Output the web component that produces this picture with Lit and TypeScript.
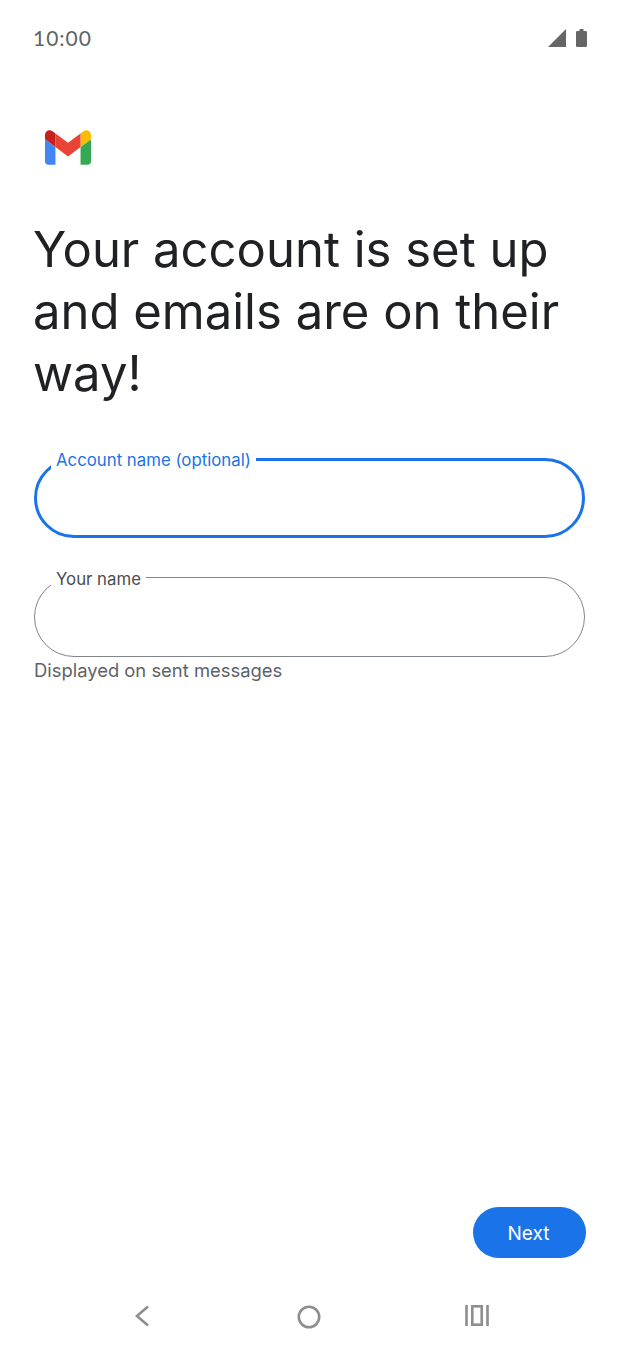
import { LitElement, html, css } from "lit";
import { customElement } from "lit/decorators.js";

@customElement("app-root")
export class AppRoot extends LitElement {
  static styles = css`
    :host { display: block; }
    .page { width: 619px; height: 1350px; box-sizing: border-box; background: #fff; display: flex; flex-direction: column; font-family: Inter, sans-serif; overflow: hidden; }
    .status { display: flex; justify-content: space-between; align-items: center; height: 18px; margin-top: 29px; padding: 0 32px 0 33px; }
    .time { font-family: Lato, sans-serif; font-size: 21px; letter-spacing: 1px; color: #5f6368; line-height: 18px; }
    .sicons { display: flex; gap: 10px; align-items: center; }
    .sicons svg { display: block; }
    .logo { display: block; margin: 83px 0 0 45px; }
    h1 { margin: 54px 0 0 33px; width: 570px; font-weight: 400; font-size: 49px; line-height: 62px; color: #202124; }
    .field { position: relative; margin: 0 34px; height: 80px; box-sizing: border-box; border-radius: 40px; border: 1px solid #80868b; }
    .field.focus { border: 3px solid #1a73e8; margin-top: 53px; }
    .field.plain { margin-top: 39px; }
    .label { position: absolute; top: -9px; left: 16px; padding: 0 5px; background: #fff; font-size: 16.8px; line-height: 20px; color: #4a4d51; white-space: nowrap; }
    .focus .label { top: -11px; left: 14px; color: #1a73e8; }
    .help { margin: 0 0 0 34px; font-size: 18.4px; line-height: 26px; color: #5f6368; }
    .actions { margin-top: auto; display: flex; justify-content: flex-end; padding-right: 33px; }
    .next { width: 113px; height: 51px; border: 0; border-radius: 26px; background: #1a73e8; color: #fff; font-family: Inter, sans-serif; font-size: 19px; padding: 2px 2px 0 0; }
    .nav { height: 92px; display: grid; grid-template-columns: 1fr 1fr 1fr; align-items: start; padding: 0 58px 0 58px; box-sizing: border-box; }
    .nav svg { display: block; justify-self: center; margin-top: 47px; }
  `;

  render() {
    return html`<div class="page">
      <div class="status">
        <span class="time">10:00</span>
        <div class="sicons">
          <svg width="18" height="18" viewBox="0 0 18 18"><path d="M18 0V18H0Z" fill="#666"/></svg>
          <svg width="11" height="18" viewBox="0 0 11 18"><path d="M3.500 0h4v2h2.200a1.300 1.300 0 0 1 1.300 1.300v13.400a1.300 1.300 0 0 1-1.300 1.300H1.300A1.300 1.300 0 0 1 0 16.700V3.300A1.300 1.300 0 0 1 1.300 2h2.200z" fill="#666"/></svg>
        </div>
      </div>
      <svg class="logo" width="46" height="35" viewBox="52 42 88 66">
        <path fill="#4285f4" d="M58 108h14V74L52 59v43c0 3.320 2.690 6 6 6"/>
        <path fill="#34a853" d="M120 108h14c3.320 0 6-2.690 6-6V59l-20 15"/>
        <path fill="#fbbc04" d="M120 48v26l20-15v-8c0-7.420-8.470-11.650-14.400-7.200"/>
        <path fill="#ea4335" d="M72 74V48l24 18 24-18v26L96 92"/>
        <path fill="#c5221f" d="M52 51v8l20 15V48l-5.600-4.200c-5.940-4.450-14.400-.22-14.400 7.200"/>
      </svg>
      <h1>Your account is set up and emails are on their way!</h1>
      <div class="field focus"><span class="label">Account name (optional)</span></div>
      <div class="field plain"><span class="label">Your name</span></div>
      <div class="help">Displayed on sent messages</div>
      <div class="actions"><button class="next">Next</button></div>
      <div class="nav">
        <svg width="16" height="22" viewBox="0 0 16 22"><path d="M14 1.500 3 11l11 9.500" fill="none" stroke="#8e8e8e" stroke-width="2.600"/></svg>
        <svg width="24" height="24" viewBox="0 0 24 24"><circle cx="12" cy="12" r="10.200" fill="none" stroke="#8e8e8e" stroke-width="2.600"/></svg>
        <svg width="24" height="21" viewBox="0 0 24 21"><path d="M1.500 0v21M22.500 0v21" stroke="#8e8e8e" stroke-width="2.600" fill="none"/><rect x="7.300" y="1.300" width="9.400" height="18.400" fill="none" stroke="#8e8e8e" stroke-width="2.600"/></svg>
      </div>
    </div>`;
  }
}
